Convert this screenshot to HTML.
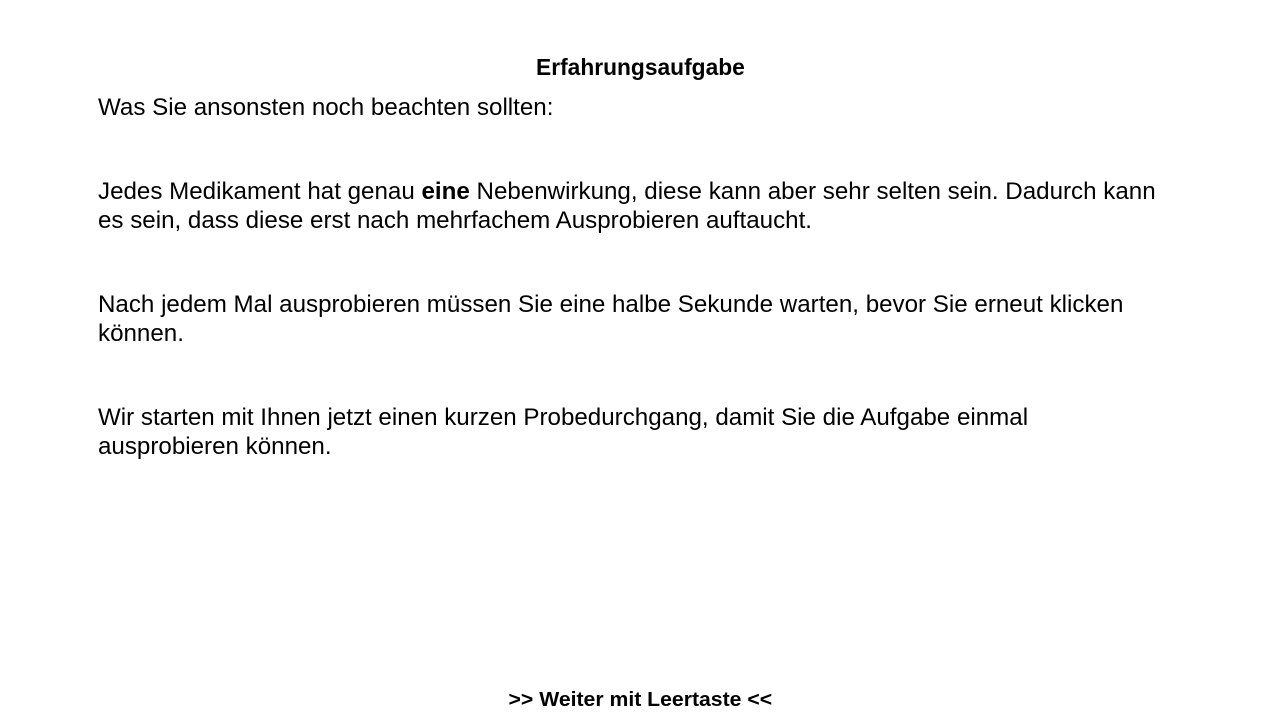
<!DOCTYPE html>
<html><head><meta charset="utf-8"><style>
body{margin:0;width:1280px;height:720px;background:#fff;position:relative;overflow:hidden;font-family:"Liberation Sans",sans-serif;color:#000}
.l{position:absolute;left:98px;font-size:24px;line-height:28px;white-space:nowrap;transform-origin:0 50%;transform:scaleX(1.006)}
.c{position:absolute;left:0;width:1280px;text-align:center;font-weight:bold;white-space:nowrap}
.c span{display:inline-block}
</style></head><body>
<div class="c" style="top:53px;font-size:23px;line-height:28px"><span style="transform:scaleX(0.99)">Erfahrungsaufgabe</span></div>
<div class="l" style="top:94px">Was Sie ansonsten noch beachten sollten:</div>
<div class="l" style="top:178px">Jedes Medikament hat genau <b>eine</b> Nebenwirkung, diese kann aber sehr selten sein. Dadurch kann</div>
<div class="l" style="top:207px">es sein, dass diese erst nach mehrfachem Ausprobieren auftaucht.</div>
<div class="l" style="top:291px">Nach jedem Mal ausprobieren müssen Sie eine halbe Sekunde warten, bevor Sie erneut klicken</div>
<div class="l" style="top:320px">können.</div>
<div class="l" style="top:404px">Wir starten mit Ihnen jetzt einen kurzen Probedurchgang, damit Sie die Aufgabe einmal</div>
<div class="l" style="top:433px">ausprobieren können.</div>
<div class="c" style="top:688px;font-size:20px;line-height:24px"><span style="transform:scaleX(1.06)">&gt;&gt; Weiter mit Leertaste &lt;&lt;</span></div>
</body></html>
